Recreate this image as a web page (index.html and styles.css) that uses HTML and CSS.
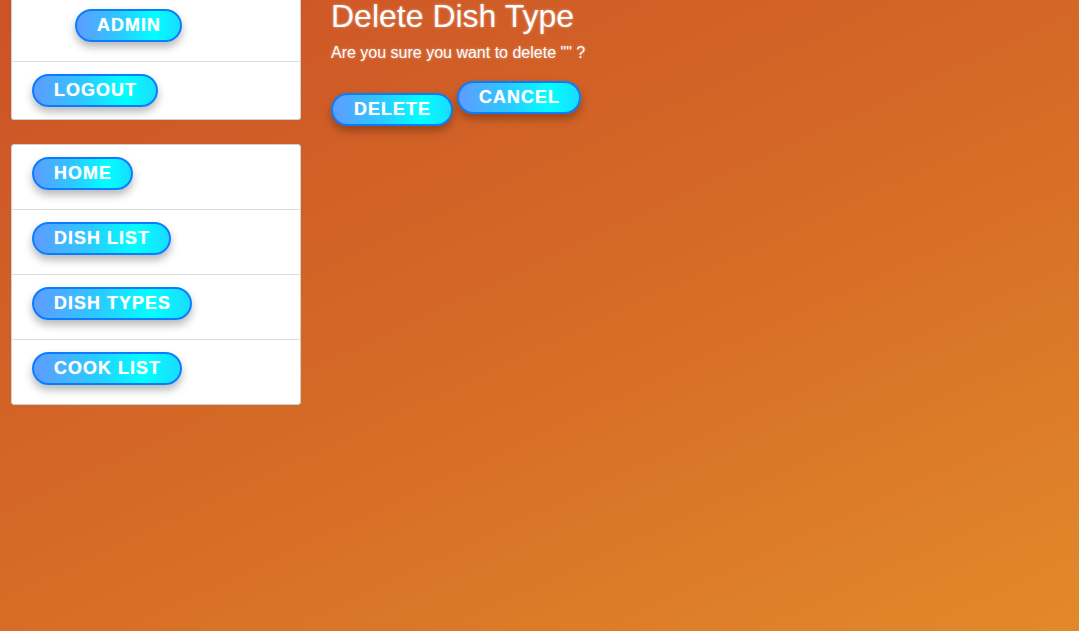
FILE: index.html
```html
<!DOCTYPE html>
<html>
<head>
<meta charset="utf-8">
<link rel="stylesheet" href="styles.css">
</head>
<body>
<div class="page">
  <aside class="sidebar">
    <ul class="card card-top">
      <li class="item item-admin"><a class="btn btn-admin" href="#">ADMIN</a></li>
      <li class="item item-logout"><a class="btn" href="#">LOGOUT</a></li>
    </ul>
    <ul class="card card-nav">
      <li class="item"><a class="btn" href="#">HOME</a></li>
      <li class="item"><a class="btn" href="#">DISH LIST</a></li>
      <li class="item"><a class="btn" href="#">DISH TYPES</a></li>
      <li class="item"><a class="btn" href="#">COOK LIST</a></li>
    </ul>
  </aside>
  <main class="main">
    <h1 class="title">Delete Dish Type</h1>
    <p class="question">Are you sure you want to delete "" ?</p>
    <div class="actions">
      <form class="delete-form"><button class="btn" type="button">DELETE</button></form>
      <a class="btn" href="#">CANCEL</a>
    </div>
  </main>
</div>
</body>
</html>
```
FILE: styles.css
```css
html, body {
  margin: 0;
  padding: 0;
}
body {
  min-height: 631px;
  background: linear-gradient(155deg, #cc5227 0%, #d56a26 50%, #e2892a 100%);
  font-family: "Liberation Sans", Arial, sans-serif;
  overflow: hidden;
}
.page {
  display: flex;
  gap: 30px;
  padding-left: 11px;
  align-items: flex-start;
}
.sidebar {
  width: 290px;
  flex: none;
  display: flex;
  flex-direction: column;
  gap: 24px;
}
.card {
  list-style: none;
  margin: 0;
  padding: 0;
  background: #fff;
  border: 1px solid #cfcfcf;
  border-radius: 0 0 3px 3px;
}
.card-top {
  border-top: none;
}
.card-nav {
  border-radius: 3px;
}
.item {
  box-sizing: border-box;
  height: 65px;
  padding: 12px 20px 0;
  border-bottom: 1px solid #dcdcdc;
}
.item:last-child {
  border-bottom: none;
  height: 64px;
}
.item-admin {
  height: 62px;
  padding: 9px 20px 0 63px;
}
.item-logout.item {
  height: 57px;
}
.btn {
  display: inline-block;
  box-sizing: border-box;
  height: 33px;
  padding: 4px 19px 0 20px;
  border: 2px solid #0a7dff;
  border-radius: 17px;
  background: linear-gradient(90deg, #5f9cff 0%, #2cc8ff 40%, #00ffff 75%, #1bdcff 100%);
  color: #fff;
  font-family: "Liberation Sans", Arial, sans-serif;
  font-weight: bold;
  font-size: 18px;
  line-height: 21px;
  letter-spacing: 1px;
  text-decoration: none;
  box-shadow: 0 5px 9px rgba(0, 0, 0, 0.28);
  text-shadow: 0 0 1px rgba(255, 255, 255, 0.6);
  cursor: pointer;
}
.main {
  color: #fff;
  text-shadow: 0 0 3px rgba(255, 255, 255, 0.45);
}
.title {
  margin: 0;
  font-weight: normal;
  font-size: 32px;
  line-height: 32px;
  padding-top: 0;
}
.question {
  margin: 11px 0 0;
  font-size: 16px;
  line-height: 20px;
}
.actions {
  display: flex;
  align-items: flex-start;
  gap: 4px;
  margin-top: 18px;
}
.delete-form {
  margin: 12px 0 0;
}
.delete-form .btn {
  padding: 0 20px 0 21px;
  height: 33px;
}
```
